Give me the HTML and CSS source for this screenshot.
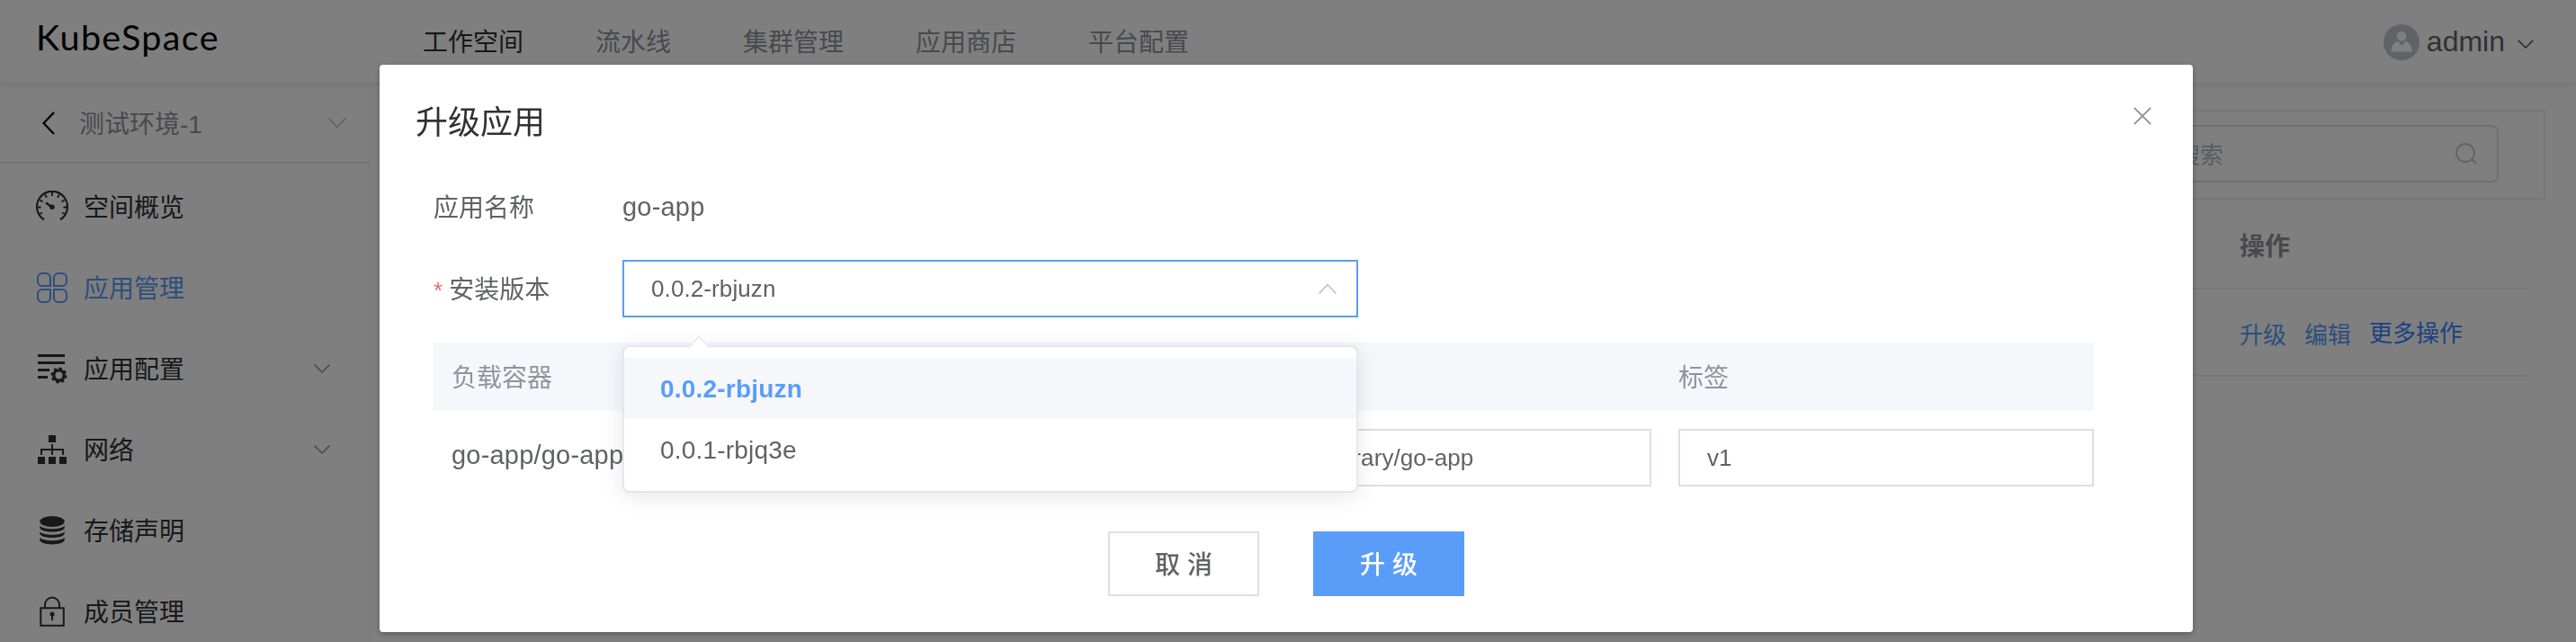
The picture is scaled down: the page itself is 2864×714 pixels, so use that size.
FILE: index.html
```html
<!DOCTYPE html>
<html lang="zh-CN">
<head>
<meta charset="utf-8">
<title>KubeSpace</title>
<link rel="stylesheet" href="styles.css">
</head>
<body>
<div class="app">
  <header class="header">
    <div class="logo">KubeSpace</div>
    <nav class="nav">
      <a class="nav-item current">工作空间</a>
      <a class="nav-item">流水线</a>
      <a class="nav-item">集群管理</a>
      <a class="nav-item">应用商店</a>
      <a class="nav-item">平台配置</a>
    </nav>
    <div class="user">
      <svg class="avatar" viewBox="0 0 40 40"><circle cx="20" cy="20" r="20" fill="#c0c4cc"/><circle cx="20" cy="13.3" r="5.4" fill="#fff"/><path d="M8.5 30.5c0-6 3-10.500 7.500-11.700l4.200 5.200 4.200-5.200c4.500 1.200 7.300 5.700 7.300 11.700z" fill="#fff"/></svg>
      <span class="user-name">admin</span>
      <svg class="user-arrow" viewBox="0 0 18 10"><path d="M.8.800 9 9 17.200.8" fill="none" stroke="#606266" stroke-width="1.700"/></svg>
    </div>
  </header>
  <div class="body">
    <aside class="sidebar">
      <div class="space">
        <svg class="back" viewBox="0 0 14 26"><path d="M13 1 1.500 13 13 25" fill="none" stroke="#000" stroke-width="2.300"/></svg>
        <span class="space-name">测试环境-1</span>
        <svg class="space-arrow" viewBox="0 0 20 12"><path d="M.7.700 10 10.500 19.300.7" fill="none" stroke="#c0c4cc" stroke-width="1.700"/></svg>
      </div>
      <ul class="menu">
        <li class="menu-item">
          <svg class="menu-icon" viewBox="0 0 36 36" fill="none" stroke="currentColor"><path d="M9 32.200A17 17 0 1 1 27 32.200" stroke-width="2.200"/><path d="M18 2v4M10 4.500l2 3.300M26 4.500l-2 3.300M4.300 10.500l3.300 2M31.700 10.500l-3.300 2M1.500 18.500h4M30.500 18.500h4M3.500 26l3.500-1.500M32.500 26 29 24.500" stroke-width="1.900"/><path d="m11 13.500 7 5" stroke-width="2.400"/><circle cx="18" cy="18.300" r="2.700" fill="currentColor" stroke="none"/></svg>
          <span class="menu-text">空间概览</span>
        </li>
        <li class="menu-item active">
          <svg class="menu-icon" viewBox="0 0 36 36" fill="none" stroke="currentColor" stroke-width="2"><path d="M16 16H7a5 5 0 0 1-5-5V7a5 5 0 0 1 5-5h4a5 5 0 0 1 5 5zM20 16h9a5 5 0 0 0 5-5V7a5 5 0 0 0-5-5h-4a5 5 0 0 0-5 5zM16 20H7a5 5 0 0 0-5 5v4a5 5 0 0 0 5 5h4a5 5 0 0 0 5-5zM20 20h9a5 5 0 0 1 5 5v4a5 5 0 0 1-5 5h-4a5 5 0 0 1-5-5z"/></svg>
          <span class="menu-text">应用管理</span>
        </li>
        <li class="menu-item">
          <svg class="menu-icon" viewBox="0 0 36 36" fill="currentColor"><path d="M2 2h30v3H2zM2 10h30v3H2zM2 18h13v3H2zM2 26h11v3H2z"/><circle cx="25.500" cy="25.500" r="5.700" fill="none" stroke="currentColor" stroke-width="3.400"/><circle cx="25.500" cy="25.500" r="7.600" fill="none" stroke="currentColor" stroke-width="2.800" stroke-dasharray="3 2.970"/></svg>
          <span class="menu-text">应用配置</span>
          <svg class="menu-arrow" viewBox="0 0 18 10"><path d="M.6.600 9 9 17.400.6" fill="none" stroke="#909399" stroke-width="1.500"/></svg>
        </li>
        <li class="menu-item">
          <svg class="menu-icon" viewBox="0 0 36 36" fill="currentColor"><path d="M14 2h8v8h-8zM2 26h8v8H2zM14 26h8v8h-8zM26 26h8v8h-8z"/><path d="M18 12v12M6 24v-6h24v6" fill="none" stroke="currentColor" stroke-width="2"/></svg>
          <span class="menu-text">网络</span>
          <svg class="menu-arrow" viewBox="0 0 18 10"><path d="M.6.600 9 9 17.400.6" fill="none" stroke="#909399" stroke-width="1.500"/></svg>
        </li>
        <li class="menu-item">
          <svg class="menu-icon" viewBox="0 0 36 36" fill="currentColor"><ellipse cx="18" cy="8" rx="13.700" ry="6"/><path d="M4.300 12.500c3 5 24.400 5 27.400 0v2.500c-1 6-26.400 6-27.400 0zM4.300 19c3 5 24.400 5 27.400 0v2.500c-1 6-26.400 6-27.400 0zM4.300 25.500c3 5 24.400 5 27.400 0v3c-1 6.500-26.400 6.500-27.400 0z"/></svg>
          <span class="menu-text">存储声明</span>
        </li>
        <li class="menu-item">
          <svg class="menu-icon" viewBox="0 0 36 36" fill="none" stroke="currentColor" stroke-width="2"><path d="M5.300 14.300h25.500v19.500H5.300zM10 14V10.500a8 8 0 0 1 16 0V14"/><path d="M18 20.500v7.500" stroke-width="2"/><circle cx="18" cy="21" r="2.500" fill="currentColor" stroke="none"/></svg>
          <span class="menu-text">成员管理</span>
        </li>
      </ul>
    </aside>
    <main class="main">
      <div class="toolbar">
        <div class="search"><span class="search-text">请输入关键字搜索</span>
          <svg class="search-icon" viewBox="0 0 24 24"><circle cx="11" cy="11" r="10" fill="none" stroke="#c0c4cc" stroke-width="1.800"/><path d="m18 18 4.500 4.500" stroke="#c0c4cc" stroke-width="1.800"/></svg>
        </div>
      </div>
      <div class="list">
        <div class="list-head"><span class="ops">操作</span></div>
        <div class="list-row"><div class="ops links"><a>升级</a><a>编辑</a><a class="more">更多操作</a></div></div>
      </div>
    </main>
  </div>
</div>

<div class="mask">
  <section class="dialog">
    <div class="dialog-head">
      <h2 class="dialog-title">升级应用</h2>
      <svg class="close" viewBox="0 0 20 20"><path d="m.8.800 18.400 18.400M19.200.8.800 19.200" stroke="#909399" stroke-width="1.900"/></svg>
    </div>
    <div class="form">
      <div class="form-row name-row">
        <label class="label">应用名称</label>
        <span class="value">go-app</span>
      </div>
      <div class="form-row">
        <label class="label required">安装版本</label>
        <div class="select">
          <span>0.0.2-rbjuzn</span>
          <svg class="select-arrow" viewBox="0 0 20 12"><path d="M.7 11.300 10 1.500l9.300 9.800" fill="none" stroke="#c0c4cc" stroke-width="1.700"/></svg>
          <div class="dropdown">
            <div class="option selected">0.0.2-rbjuzn</div>
            <div class="option">0.0.1-rbjq3e</div>
          </div>
        </div>
      </div>
      <div class="grid grid-head">
        <span class="cell">负载容器</span><span></span><span class="cell-tag">标签</span>
      </div>
      <div class="grid grid-row">
        <span class="cell">go-app/go-app</span>
        <div class="input">library/go-app</div>
        <div class="input">v1</div>
      </div>
    </div>
    <div class="actions">
      <button class="btn">取 消</button>
      <button class="btn primary">升 级</button>
    </div>
  </section>
</div>
</body>
</html>
```
FILE: styles.css
```css
* { box-sizing: border-box; }
body {
  margin: 0;
  overflow: hidden;
  font-family: "Liberation Sans", "Noto Sans CJK SC", sans-serif;
  font-size: 28px;
  color: #606266;
  background: #fff;
}
svg { display: block; flex: none; }

.app { height: 714px; display: flex; flex-direction: column; overflow: hidden; }
.header {
  height: 93px;
  flex: none;
  display: flex;
  align-items: center;
  border-bottom: 1px solid #f0f0f2;
  box-shadow: 0 2px 6px rgba(0, 21, 41, .09);
  z-index: 1;
}
.logo {
  width: 470px;
  padding: 0 0 10px 40px;
  font: 39.500px/48px Lato, sans-serif;
  letter-spacing: 1.350px;
  color: #000;
}
.nav { flex: 1; display: flex; gap: 80px; padding-top: 4px; }
.nav-item { color: #909399; line-height: 40px; }
.nav-item.current { color: #303133; }
.user { display: flex; align-items: center; padding: 2px 47px 0 0; }
.avatar { width: 40px; height: 40px; }
.user-name { margin: -2px 14px 0 8px; font-size: 32px; color: #606266; }
.user-arrow { width: 18px; height: 10px; margin-top: 4px; }

.body { flex: 1; display: flex; min-height: 0; }
.sidebar { width: 410px; flex: none; box-shadow: 1px 0 5px rgba(0, 21, 41, .08); }
.space {
  height: 89px;
  display: flex;
  align-items: center;
  padding: 0 25px 0 47px;
  border-bottom: 2px solid #e6e8f2;
}
.back { width: 14px; height: 26px; margin-right: 27px; }
.space-name { flex: 1; color: #909399; padding-bottom: 1px; }
.space-arrow { width: 20px; height: 12px; }
.menu { list-style: none; margin: 0; padding: 3px 0 0; }
.menu-item {
  height: 90px;
  display: flex;
  align-items: center;
  gap: 17px;
  padding: 0 43px 0 40px;
  color: #303133;
}
.menu-item.active { color: #5a9df8; }
.menu-icon { width: 36px; height: 36px; }
.menu-text { flex: 1; padding-bottom: 2px; }
.menu-arrow { width: 18px; height: 10px; }

.main { flex: 1; padding: 29px 34px 0 30px; }
.toolbar {
  height: 100px;
  display: flex;
  justify-content: flex-end;
  padding: 15px 50px 0 0;
  border: 2px solid #ebeef5;
}
.search {
  width: 614px;
  height: 64px;
  display: flex;
  align-items: center;
  justify-content: space-between;
  padding: 0 22px 0 98px;
  border: 2px solid #dcdfe6;
  border-radius: 8px;
  font-size: 26px;
  color: #b4b8c0;
}
.search-text { padding-bottom: 2px; }
.search-icon { width: 24px; height: 24px; }
.list { margin-right: 20px; }
.list-head, .list-row {
  display: flex;
  justify-content: flex-end;
  align-items: center;
  border-bottom: 2px solid #ebeef5;
}
.list-head { height: 100px; padding-top: 2px; font-weight: bold; color: #909399; }
.list-row { height: 97px; }
.ops { width: 320px; }
.links { display: flex; gap: 20px; font-size: 26px; color: #5a9df8; padding-top: 2px; }
.more { color: #3585ff; margin-top: -2px; }

.mask {
  position: fixed;
  inset: 0;
  z-index: 10;
  padding: 72px 0 0 422px;
  background: rgba(0, 0, 0, .5);
}
.dialog {
  width: 2016px;
  height: 631px;
  border-radius: 4px;
  background: #fff;
  box-shadow: 0 2px 6px rgba(0, 0, 0, .3);
}
.dialog-head {
  height: 130px;
  display: flex;
  justify-content: space-between;
  padding: 41px 46px 0 40px;
}
.dialog-title { margin: 0; font-size: 36px; line-height: 48px; font-weight: 400; color: #303133; }
.close { width: 20px; height: 20px; margin-top: 6px; }
.form { padding: 0 110px 0 60px; }
.form-row { display: flex; align-items: center; height: 64px; margin-bottom: 28px; }
.name-row { height: 59px; padding-bottom: 2px; }
.label { width: 210px; padding-bottom: 3px; }
.required::before { content: "*"; margin-right: 7px; font-size: 26px; color: #e8706e; }
.value, .grid-row .cell { font-size: 29px; letter-spacing: .200px; }
.select {
  position: relative;
  width: 818px;
  height: 64px;
  display: flex;
  align-items: center;
  justify-content: space-between;
  padding: 0 22px 0 30px;
  border: 2px solid #5a9df8;
  font-size: 26px;
  letter-spacing: .1px;
}
.select-arrow { width: 20px; height: 12px; }
.dropdown {
  position: absolute;
  z-index: 2;
  left: -2px;
  top: 93px;
  width: 818px;
  height: 164px;
  padding-top: 12px;
  border: 2px solid #e4e7ed;
  border-radius: 8px;
  background: #fff;
  box-shadow: 0 4px 24px rgba(0, 0, 0, .1);
  font-size: 28px;
  letter-spacing: .2px;
}
.dropdown::before {
  content: "";
  position: absolute;
  left: 74px;
  top: -9px;
  width: 16px;
  height: 16px;
  border: solid #ebeef5;
  border-width: 2px 0 0 2px;
  background: linear-gradient(135deg, #fff 50%, transparent 50%);
  transform: rotate(45deg);
}
.option { height: 68px; line-height: 69px; padding-left: 40px; }
.option.selected { background: #f5f7fb; color: #5a9df8; font-weight: bold; }
.grid { display: grid; grid-template-columns: 934px 390px 462px; column-gap: 30px; align-items: center; }
.grid-head { height: 76px; padding-bottom: 2px; background: #f5f7fb; color: #909399; }
.grid-row { padding-top: 20px; }
.grid-row .cell { margin-top: -6px; }
.cell { padding-left: 20px; }
.input {
  height: 64px;
  line-height: 60px;
  padding-left: 30px;
  border: 2px solid #dcdfe6;
  font-size: 26px;
  letter-spacing: .1px;
}
.actions { display: flex; justify-content: center; gap: 60px; padding: 50px 0 0; }
.btn {
  width: 168px;
  height: 72px;
  padding: 0 0 2px;
  border: 2px solid #dcdfe6;
  background: #fff;
  color: #606266;
  font: 500 28px "Liberation Sans", "Noto Sans CJK SC", sans-serif;
}
.btn.primary { background: #5a9df8; border-color: #5a9df8; color: #fff; }
```
